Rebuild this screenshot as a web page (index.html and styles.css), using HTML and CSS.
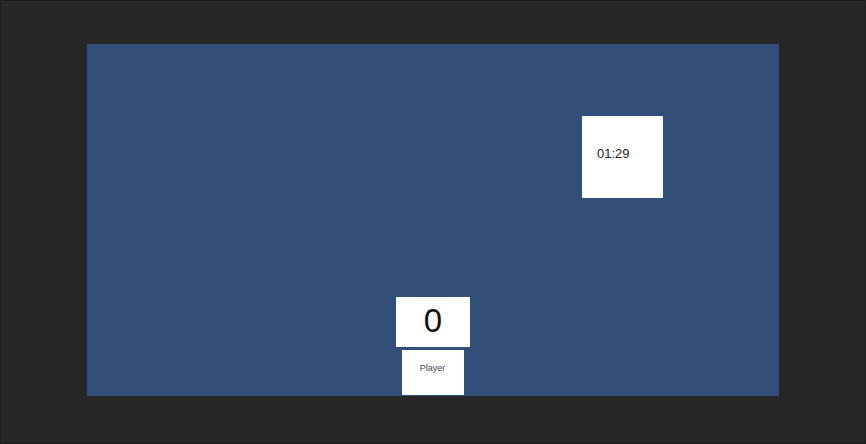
FILE: index.html
```html
<!DOCTYPE html>
<html>
<head>
<meta charset="utf-8">
<link rel="stylesheet" href="styles.css">
</head>
<body>
<div class="frame">
  <div class="stage">
    <div class="timer"><span>01:29</span></div>
    <div class="score">0</div>
    <div class="player">Player</div>
  </div>
</div>
</body>
</html>
```
FILE: styles.css
```css
html, body { margin: 0; padding: 0; }
body { background: #262626; font-family: "Liberation Sans", Arial, sans-serif; }
.frame {
  width: 866px; height: 444px; box-sizing: border-box;
  border: 1px solid #1c1c1c;
  background: #272727;
  padding: 43px 0 0 86px;
}
.stage {
  width: 692px; height: 352px;
  background: #324f79;
  display: flex; flex-direction: column;
}
.timer {
  width: 81px; height: 82px; background: #fff;
  margin: 72px 0 0 495px;
  display: flex; align-items: center;
  box-sizing: border-box; padding: 0 0 8px 15px;
  font-size: 13px; color: #222;
}
.score {
  width: 74px; height: 50px; background: #fff;
  margin: 99px 0 0 309px;
  display: flex; align-items: center; justify-content: center;
  box-sizing: border-box; padding-bottom: 2px;
  font-size: 33px; color: #111;
}
.player {
  width: 62px; height: 45px; background: #fff;
  margin: 3px 0 0 315px;
  display: flex; justify-content: center;
  box-sizing: border-box; padding-top: 13px; padding-right: 1px;
  font-size: 9px; color: #444;
}
```
